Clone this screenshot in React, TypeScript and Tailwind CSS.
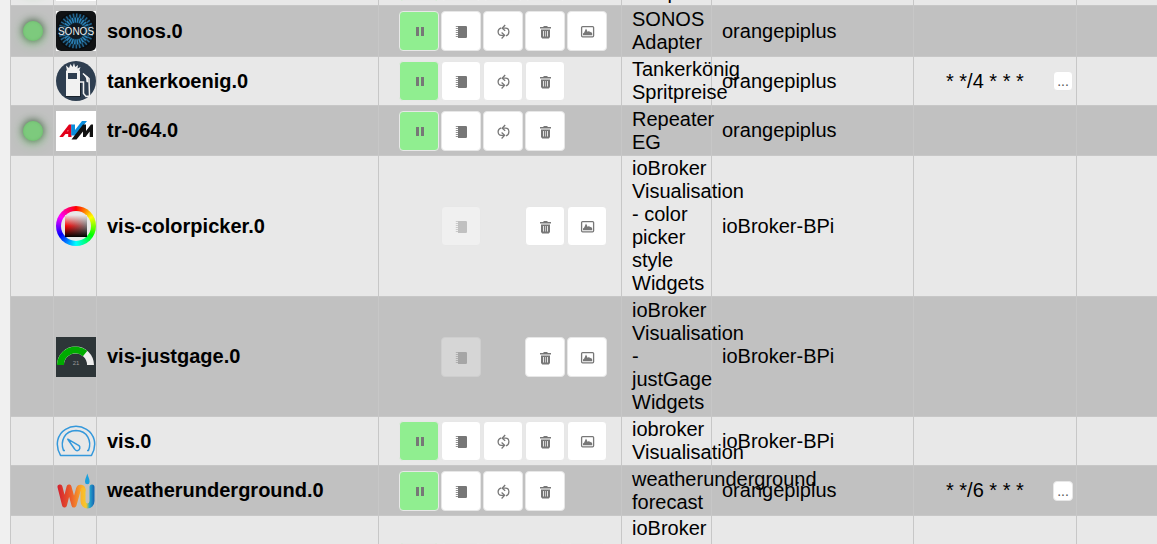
import type { ReactNode } from "react";
import clsx from "clsx";

type Action = "pause" | "log" | "reload" | "delete" | "image";

interface Instance {
  id: string;
  name?: string;
  icon?: ReactNode;
  led?: boolean;
  actions: (Action | null)[];
  disabled?: Action[];
  description: string;
  descriptionClass?: string;
  host?: string;
  schedule?: string;
  height: string;
}

const labels: Record<Action, string> = {
  pause: "Pause",
  log: "Log",
  reload: "Reload",
  delete: "Delete",
  image: "Image",
};

const glyphs: Record<Action, ReactNode> = {
  pause: <path d="M5 4h3v9H5zM10 4h3v9h-3z" />,
  log: (
    <>
      <path d="M5 3h8.2l.8.8v10.4l-.8.8H5z" />
      <path d="M2.8 3.5H5M2.8 5.5H5M2.8 7.5H5M2.8 9.5H5M2.8 11.5H5M2.8 13.5H5" stroke="currentColor" strokeWidth="0.8" />
    </>
  ),
  reload: (
    <g fill="none" stroke="currentColor" strokeWidth="1.3">
      <path d="M6.2 4.8C4 5.4 3.1 7 3.1 8.8c0 2 1.2 3.5 3.2 3.5h3" />
      <path d="M7.6 5.2h3c2 0 3.3 1.5 3.3 3.6 0 1.9-.9 3.4-2.9 4" />
      <path d="M10.2 2 7.2 5.2l3 2.6M6.6 9.6l3 2.7-3 3.2" />
    </g>
  ),
  delete: (
    <>
      <path d="M6.5 3h4v1H14v1.5H3V4h3.5z" />
      <path fillRule="evenodd" d="M4 6.5h9V14l-1.2 1.5H5.2L4 14zM6 8v5.5h.8V8zM8.2 8v5.5h.6V8zM10.2 8v5.5h.8V8z" />
    </>
  ),
  image: (
    <>
      <rect x="2.6" y="3.6" width="12" height="10.2" rx="1" fill="none" stroke="currentColor" strokeWidth="1.3" />
      <path d="M4 12.3v-1.8l1.2-1 1.8-4L8.8 9 10 7.8l1 1.5 1-.6 1.2 1.8v1.8z" />
    </>
  ),
};

function SonosIcon() {
  return (
    <svg viewBox="0 0 40 40" className="size-10 bg-white">
      <defs>
        <radialGradient id="sonos-glow">
          <stop offset="0.3" stopColor="#17455f" />
          <stop offset="1" stopColor="#08090b" />
        </radialGradient>
      </defs>
      <rect width="40" height="40" rx="5" fill="#101214" />
      <circle cx="20" cy="20" r="19" fill="url(#sonos-glow)" />
      <circle cx="20" cy="20" r="11" fill="none" stroke="#2b82b8" strokeWidth="5" strokeDasharray="1.5 1" />
      <circle cx="20" cy="20" r="15.5" fill="none" stroke="#22648f" strokeWidth="4" strokeDasharray="1.5 1.8" />
      <circle cx="20" cy="20" r="8" fill="#101820" />
      <rect y="15.5" width="40" height="8.5" fill="#0b1720" opacity="0.6" />
      <text x="20" y="23.5" fontSize="10" textAnchor="middle" fill="#ececec">SONOS</text>
    </svg>
  );
}

function PumpIcon() {
  return (
    <svg viewBox="0 0 40 40" className="size-10">
      <circle cx="20" cy="20" r="20" fill="#2e3e50" />
      <path d="M11 10 10 4.5l3 2.5L14.5 3l2 3L18 2l1.2 4L22 4l-.5 3.5 3-1.5L23 10z" fill="#f1f1f1" />
      <path fillRule="evenodd" d="M10 9.5h14V35H10zm2 2.5v6h9v-6z" fill="#f1f1f1" />
      <path d="M9.5 35.500h15V22" fill="none" stroke="#19222c" strokeWidth="1" />
      <path d="M24 21h3.500v11.500l2.500 3 3.500-.5-.5-17.500L27 12.500" fill="none" stroke="#f1f1f1" strokeWidth="1.5" />
      <path d="m26.500 12 5.500 4 .5 5.500-2-.5-.5-4z" fill="#f1f1f1" />
    </svg>
  );
}

function AvmIcon() {
  return (
    <svg viewBox="0 0 40 40" className="size-10 bg-white">
      <path fillRule="evenodd" d="M3.3 26 13 13.500h2.500V26h-3.300v-3H9.500L7 26zM11.200 20.200h1v-1.400z" fill="#e2001a" />
      <path d="M15.200 13.500H19V19l7-9h5L19.500 24.500h-4.300z" fill="#0a8ddc" />
      <path d="m15.500 28.500 11.500-15h3V20l5-6.500h2V26h-3.300v-5.500L29.500 26H27v-5.500l-6.500 8z" fill="#111" />
    </svg>
  );
}

function ColorPickerIcon() {
  return (
    <div className="grid size-10 place-items-center rounded-full bg-[conic-gradient(red,yellow,lime,cyan,blue,magenta,red)]">
      <div className="grid size-[30px] place-items-center rounded-full bg-[#e8e8e8]">
        <div className="size-[22px] bg-[linear-gradient(#e8e8e8,transparent_50%,black),linear-gradient(90deg,red,#777)]" />
      </div>
    </div>
  );
}

function GaugeIcon() {
  return (
    <svg viewBox="0 0 40 40" className="size-10 bg-[#2d3538]">
      <g fill="none" strokeWidth="7">
        <path d="M4.5 28a15 15 0 0 1 30 0" stroke="#eee" />
        <path d="M4.5 28a15 15 0 0 1 24.640-11.500" stroke="#00ab00" />
      </g>
      <text x="20" y="27.5" fontSize="6" textAnchor="middle" fill="#999">21</text>
    </svg>
  );
}

function VisIcon() {
  return (
    <svg viewBox="0 0 40 40" className="size-10" fill="none" stroke="#3498db" strokeWidth="1.5">
      <path d="M4.5 34.400C-1.500 24 1.500 13 9.500 8.300a20 20 0 0 1 21 0C38.500 13 41.500 24 35.500 34.400z" strokeLinejoin="round" />
      <path d="M9 29.500H7.500C4 20 8.500 9.800 20 9.500c11.500.3 16 10.500 12.500 20H31" />
      <path d="M11.800 18.200 23 24.600c1.500 1.400 1 4.200-1.200 5-1.600.3-2.600-.4-3.200-1.600z" strokeLinejoin="round" />
    </svg>
  );
}

function WundergroundIcon() {
  return (
    <svg viewBox="0 0 40 40" className="size-10">
      <defs>
        <linearGradient id="wu-w" gradientUnits="userSpaceOnUse" x1="2" y1="0" x2="27" y2="0">
          <stop offset="0" stopColor="#d3222f" />
          <stop offset="0.5" stopColor="#ea5b2b" />
          <stop offset="1" stopColor="#fbb42c" />
        </linearGradient>
        <linearGradient id="wu-u" gradientUnits="userSpaceOnUse" x1="25" y1="0" x2="38" y2="0">
          <stop offset="0" stopColor="#fbb42c" />
          <stop offset="0.4" stopColor="#f5c92c" />
          <stop offset="0.65" stopColor="#25a8cf" />
          <stop offset="1" stopColor="#1767b2" />
        </linearGradient>
      </defs>
      <g fill="none" strokeWidth="5" strokeLinecap="round" strokeLinejoin="round">
        <path d="M4 16 8.500 34l4.500-18 5 18 4.500-16c.5-2.500 4.500-2.500 4.500 1" stroke="url(#wu-w)" />
        <path d="M27 19v11c0 6.500 9 6.500 9 0V16" stroke="url(#wu-u)" />
      </g>
      <path d="M31.300 2.500c1 4 2.300 5.500 2.300 8.200a2.300 2.600 0 0 1-4.600 0c0-2.700 1.300-4.200 2.300-8.200z" fill="#1ba0dc" />
    </svg>
  );
}

const instances: Instance[] = [
  {
    id: "previous",
    icon: <div className="size-10 bg-white" />,
    led: true,
    actions: ["pause", "log", "reload", "delete"],
    description: "Adapter",
    descriptionClass: "align-bottom",
    height: "h-[49px]",
  },
  {
    id: "sonos",
    name: "sonos.0",
    icon: <SonosIcon />,
    led: true,
    actions: ["pause", "log", "reload", "delete", "image"],
    description: "SONOS Adapter",
    host: "orangepiplus",
    height: "h-[51px]",
  },
  {
    id: "tankerkoenig",
    name: "tankerkoenig.0",
    icon: <PumpIcon />,
    actions: ["pause", "log", "reload", "delete"],
    description: "Tankerkönig Spritpreise",
    host: "orangepiplus",
    schedule: "* */4 * * *",
    height: "h-[49px]",
  },
  {
    id: "tr-064",
    name: "tr-064.0",
    icon: <AvmIcon />,
    led: true,
    actions: ["pause", "log", "reload", "delete"],
    description: "Repeater EG",
    host: "orangepiplus",
    height: "h-[50px]",
  },
  {
    id: "vis-colorpicker",
    name: "vis-colorpicker.0",
    icon: <ColorPickerIcon />,
    actions: [null, "log", null, "delete", "image"],
    disabled: ["log"],
    description: "ioBroker Visualisation - color picker style Widgets",
    host: "ioBroker-BPi",
    height: "h-[141px]",
  },
  {
    id: "vis-justgage",
    name: "vis-justgage.0",
    icon: <GaugeIcon />,
    actions: [null, "log", null, "delete", "image"],
    disabled: ["log"],
    description: "ioBroker Visualisation - justGage Widgets",
    host: "ioBroker-BPi",
    height: "h-[120px]",
  },
  {
    id: "vis",
    name: "vis.0",
    icon: <VisIcon />,
    actions: ["pause", "log", "reload", "delete", "image"],
    description: "iobroker Visualisation",
    host: "ioBroker-BPi",
    height: "h-[49px]",
  },
  {
    id: "weatherunderground",
    name: "weatherunderground.0",
    icon: <WundergroundIcon />,
    actions: ["pause", "log", "reload", "delete"],
    description: "weatherunderground forecast",
    host: "orangepiplus",
    schedule: "* */6 * * *",
    height: "h-[50px]",
  },
  {
    id: "next",
    actions: ["pause", "log", "reload", "delete", "image"],
    description: "ioBroker",
    descriptionClass: "align-top",
    height: "h-[95px]",
  },
];

function ActionButton({ action, disabled }: { action: Action; disabled?: boolean }) {
  return (
    <button
      type="button"
      aria-label={labels[action]}
      disabled={disabled}
      className={clsx(
        "grid size-10 place-items-center rounded border border-[#e7e7e7] text-[#777] disabled:opacity-35",
        action === "pause" ? "bg-[#90ee90]" : "bg-white"
      )}
    >
      <svg viewBox="0 0 16 16" className="size-4" fill="currentColor">
        {glyphs[action]}
      </svg>
    </button>
  );
}

function InstanceRow({ item, dark }: { item: Instance; dark: boolean }) {
  const cell = "border-r border-b border-[#c7c7c7] p-0";

  return (
    <tr className={clsx(item.height, dark ? "bg-[#c1c1c1]" : "bg-[#e8e8e8]")}>
      <td className={cell}>
        {item.led && (
          <div className="ml-3 size-5 rounded-full bg-[#7dca7d] shadow-[0_-1px_7px_1px_rgba(0,0,0,0.4),inset_0_0_3px_#6cba6c,0_2px_12px_#7dca7d]" />
        )}
      </td>
      <td className={clsx(cell, "pl-0.5")}>{item.icon}</td>
      <td className={clsx(cell, "px-2.5 font-bold")}>{item.name}</td>
      <td className={clsx(cell, "pl-5")}>
        <div className="flex gap-0.5">
          {item.actions.map((action, i) =>
            action ? (
              <ActionButton key={i} action={action} disabled={item.disabled?.includes(action)} />
            ) : (
              <div key={i} className="size-10" />
            )
          )}
        </div>
      </td>
      <td className={clsx(cell, "py-px pl-2.5", item.descriptionClass)}>{item.description}</td>
      <td className={clsx(cell, "px-2.5")}>{item.host}</td>
      <td className={cell}>
        {item.schedule && (
          <div className="flex items-center justify-between pr-[3px] pl-8">
            <span>{item.schedule}</span>
            <button
              type="button"
              aria-label="Edit schedule"
              className="flex size-5 items-center justify-center rounded border border-[#e7e7e7] bg-white text-sm text-[#555]"
            >
              ...
            </button>
          </div>
        )}
      </td>
      <td className="border-b border-[#c7c7c7] p-0" />
    </tr>
  );
}

export default function App() {
  return (
    <main className="h-screen overflow-hidden bg-[#f0f0f0] pl-2.5 font-['Liberation_Sans',Arial,sans-serif] text-xl/[23px] text-black">
      {/* list is scrolled a little past its first visible row */}
      <table className="-mt-[43px] w-full table-fixed border-separate border-spacing-0 border-l border-[#c7c7c7]">
        <colgroup>
          <col className="w-[43px]" />
          <col className="w-[43px]" />
          <col className="w-[282px]" />
          <col className="w-[243px]" />
          <col className="w-[90px]" />
          <col className="w-[202px]" />
          <col className="w-[163px]" />
          <col />
        </colgroup>
        <tbody>
          {instances.map((item, i) => (
            <InstanceRow key={item.id} item={item} dark={i % 2 === 1} />
          ))}
        </tbody>
      </table>
    </main>
  );
}
